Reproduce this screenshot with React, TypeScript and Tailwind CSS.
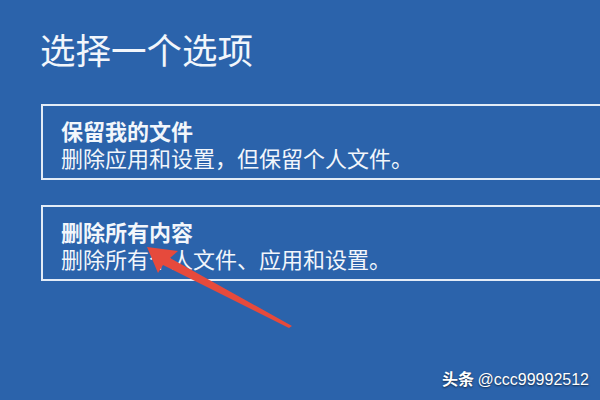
import React from "react";

const font = { fontFamily: '"Noto Sans CJK SC", "Noto Sans", sans-serif' };

function Option({ title, desc }: { title: string; desc: string }) {
  return (
    <div className="ml-[41px] mr-[-20px] h-[76px] border-[2.5px] border-[#e3ecf7] pl-[18px] pt-[11px] text-[#f2f6fb]">
      <div className="text-[22px] font-bold leading-[27px]">{title}</div>
      <div className="text-[22px] leading-[27px]">{desc}</div>
    </div>
  );
}

export default function App() {
  return (
    <div
      className="relative h-[400px] w-[600px] overflow-hidden bg-[#2b63ab]"
      style={font}
    >
      <div className="pl-[40px] pt-[25px] text-[35.5px] leading-[48px] text-[#f2f6fb]">
        选择一个选项
      </div>
      <div className="mt-[31px] flex flex-col gap-[25px]">
        <Option title="保留我的文件" desc="删除应用和设置，但保留个人文件。" />
        <Option title="删除所有内容" desc="删除所有个人文件、应用和设置。" />
      </div>
      <svg
        className="absolute left-0 top-0"
        width="600"
        height="400"
        viewBox="0 0 600 400"
      >
        <polygon
          points="147,247 178,251 170,258 292,326 289,328 163,265 158,273"
          fill="#e64a3c"
        />
      </svg>
      <div
        className="absolute right-[11px] bottom-[11px] text-[16px] leading-[18px] text-white"
        style={{ textShadow: "0 1px 2px rgba(0,0,0,0.6)" }}
      >
        <span className="font-bold">头条</span>{" "}
        <span style={{ fontFamily: '"Liberation Sans", Arial, sans-serif' }}>@ccc99992512</span>
      </div>
    </div>
  );
}
